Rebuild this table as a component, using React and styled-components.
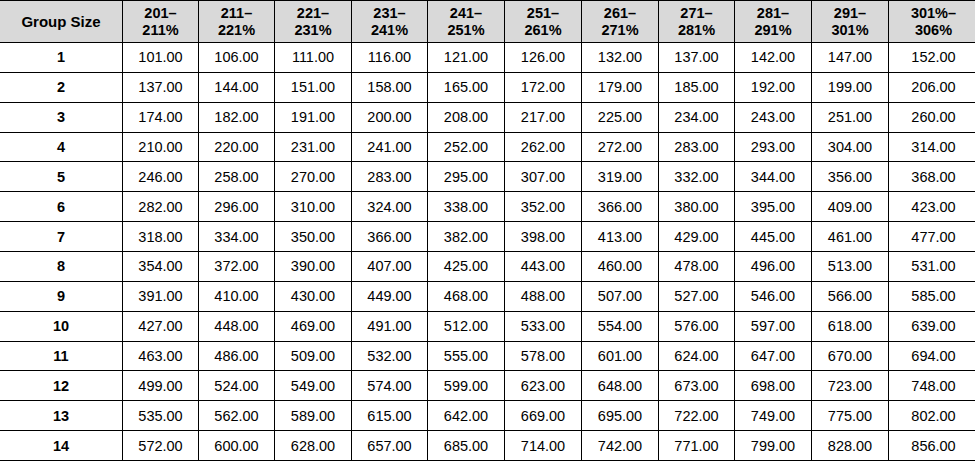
import React from 'react';
import styled, { createGlobalStyle } from 'styled-components';

const GlobalStyle = createGlobalStyle`
    html, body {
        margin: 0;
        padding: 0;
        background: #ffffff;
        overflow: hidden;
    }
`;

const Table = styled.table`
    border-collapse: collapse;
    table-layout: fixed;
    width: 979px;
    margin-left: -1px;
    font-family: 'Liberation Sans', Arial, sans-serif;
    color: #000;
`;

const HeadCell = styled.th`
    background: #d9d9d9;
    border: 1px solid #000;
    height: 41px;
    padding: 0;
    font-size: ${p => (p.wide ? '15px' : '14.5px')};
    font-weight: 700;
    line-height: 17px;
    text-align: center;
    vertical-align: middle;
`;

const Row = styled.tr`
    height: 29.86px;
`;

const SizeCell = styled.td`
    border: 1px solid #000;
    padding: 0;
    font-size: 14.5px;
    font-weight: 700;
    text-align: center;
    vertical-align: middle;
`;

const Cell = styled.td`
    border: 1px solid #000;
    padding: 0;
    font-size: 14.5px;
    text-align: center;
    vertical-align: middle;
`;

const widths = [123, 76, 76, 77, 76, 77, 77, 77, 76, 77, 77, 90];

const ranges = [
    ['201–', '211%'],
    ['211–', '221%'],
    ['221–', '231%'],
    ['231–', '241%'],
    ['241–', '251%'],
    ['251–', '261%'],
    ['261–', '271%'],
    ['271–', '281%'],
    ['281–', '291%'],
    ['291–', '301%'],
    ['301%–', '306%'],
];

const rates = [
    [101, 106, 111, 116, 121, 126, 132, 137, 142, 147, 152],
    [137, 144, 151, 158, 165, 172, 179, 185, 192, 199, 206],
    [174, 182, 191, 200, 208, 217, 225, 234, 243, 251, 260],
    [210, 220, 231, 241, 252, 262, 272, 283, 293, 304, 314],
    [246, 258, 270, 283, 295, 307, 319, 332, 344, 356, 368],
    [282, 296, 310, 324, 338, 352, 366, 380, 395, 409, 423],
    [318, 334, 350, 366, 382, 398, 413, 429, 445, 461, 477],
    [354, 372, 390, 407, 425, 443, 460, 478, 496, 513, 531],
    [391, 410, 430, 449, 468, 488, 507, 527, 546, 566, 585],
    [427, 448, 469, 491, 512, 533, 554, 576, 597, 618, 639],
    [463, 486, 509, 532, 555, 578, 601, 624, 647, 670, 694],
    [499, 524, 549, 574, 599, 623, 648, 673, 698, 723, 748],
    [535, 562, 589, 615, 642, 669, 695, 722, 749, 775, 802],
    [572, 600, 628, 657, 685, 714, 742, 771, 799, 828, 856],
];

const App = () => (
    <>
        <GlobalStyle />
        <Table>
            <colgroup>
                {widths.map((w, i) => (
                    <col key={i} style={{ width: w }} />
                ))}
            </colgroup>
            <thead>
                <tr>
                    <HeadCell wide>Group Size</HeadCell>
                    {ranges.map(([a, b]) => (
                        <HeadCell key={a}>
                            {a}
                            <br />
                            {b}
                        </HeadCell>
                    ))}
                </tr>
            </thead>
            <tbody>
                {rates.map((row, i) => (
                    <Row key={i}>
                        <SizeCell>{i + 1}</SizeCell>
                        {row.map((v, j) => (
                            <Cell key={j}>{v.toFixed(2)}</Cell>
                        ))}
                    </Row>
                ))}
            </tbody>
        </Table>
    </>
);

export default App;
